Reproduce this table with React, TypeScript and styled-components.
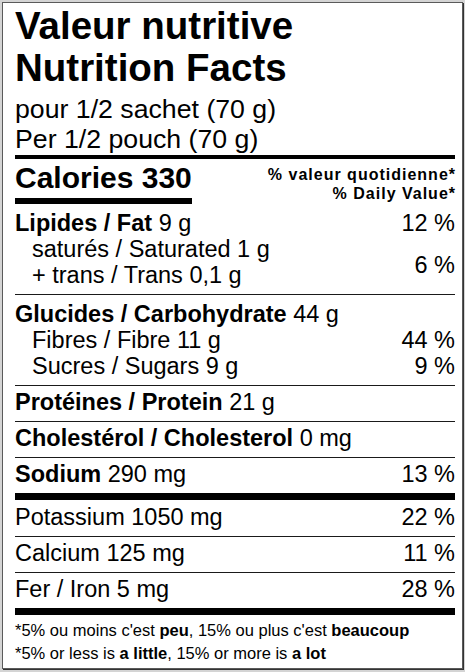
import React from 'react'
import styled, { createGlobalStyle } from 'styled-components'

const GlobalStyle = createGlobalStyle`
  *, *::before, *::after {
    box-sizing: border-box;
  }
  html, body {
    margin: 0;
    padding: 0;
    background: #d4d4d4;
  }
  body {
    font-family: "Liberation Sans", Arial, sans-serif;
    color: #000;
  }
`

const Panel = styled.div`
  margin: 2px;
  width: 461px;
  background: #fff;
  border: 1px solid #5a5a5a;
  box-shadow: 1px 1px 0 #333;
  padding: 2px 7px 4px 12px;
`

const Header = styled.header`
  padding-bottom: 1px;
`

const Title = styled.h1`
  margin: 0;
  font-size: 38.5px;
  line-height: 42px;
  font-weight: 700;
`

const Serving = styled.div`
  margin-top: 5px;
  font-size: 26.7px;
  line-height: 30px;
`

const CaloriesRow = styled.div`
  display: flex;
  justify-content: space-between;
  align-items: flex-end;
  border-top: 4px solid #000;
  padding-top: 2px;
`

const Calories = styled.span`
  font-size: 30px;
  line-height: 34px;
  font-weight: 700;
  padding-bottom: 3px;
  border-bottom: 6px solid #000;
`

const DvHeading = styled.div`
  font-size: 16px;
  line-height: 18.5px;
  font-weight: 700;
  letter-spacing: 1px;
  text-align: right;
  padding-bottom: 1px;
  margin-right: -1px;
`

const Group = styled.div<{ $first?: boolean }>`
  border-top: ${p => (p.$first ? 'none' : '1px solid #1a1a1a')};
  padding: 6px 0 6px;
  font-size: 23.5px;
  line-height: 26px;
`

const Line = styled.div<{ $indent?: boolean }>`
  display: flex;
  justify-content: space-between;
  padding-left: ${p => (p.$indent ? '17px' : '0')};
`

const Split = styled.div`
  display: flex;
  justify-content: space-between;
  align-items: center;
  padding-left: 17px;
`

const SplitPct = styled.span`
  padding-top: 5px;
`

const Row = styled.div<{ $thick?: boolean }>`
  display: flex;
  justify-content: space-between;
  border-top: ${p => (p.$thick ? '7px solid #000' : '1px solid #1a1a1a')};
  padding: ${p => (p.$thick ? '2px 0 4px' : '1px 0 4px')};
  font-size: 23.5px;
  line-height: 30px;
`

const Footnote = styled.footer`
  border-top: 7px solid #000;
  padding-top: 4px;
  font-size: 16.5px;
  line-height: 22.5px;
`

const B = styled.b`
  font-weight: 700;
`

export default function App() {
  return (
    <>
      <GlobalStyle />
      <Panel>
        <Header>
          <Title>
            Valeur nutritive
            <br />
            Nutrition Facts
          </Title>
          <Serving>
            pour 1/2 sachet (70 g)
            <br />
            Per 1/2 pouch (70 g)
          </Serving>
        </Header>

        <CaloriesRow>
          <Calories>Calories 330</Calories>
          <DvHeading>
            % valeur quotidienne*
            <br />% Daily Value*
          </DvHeading>
        </CaloriesRow>

        <Group $first>
          <Line>
            <span>
              <B>Lipides / Fat</B> 9 g
            </span>
            <span>12 %</span>
          </Line>
          <Split>
            <div>
              saturés / Saturated 1 g
              <br />+ trans / Trans 0,1 g
            </div>
            <SplitPct>6 %</SplitPct>
          </Split>
        </Group>

        <Group>
          <Line>
            <span>
              <B>Glucides / Carbohydrate</B> 44 g
            </span>
          </Line>
          <Line $indent>
            <span>Fibres / Fibre 11 g</span>
            <span>44 %</span>
          </Line>
          <Line $indent>
            <span>Sucres / Sugars 9 g</span>
            <span>9 %</span>
          </Line>
        </Group>

        <Row>
          <span>
            <B>Protéines / Protein</B> 21 g
          </span>
        </Row>
        <Row>
          <span>
            <B>Cholestérol / Cholesterol</B> 0 mg
          </span>
        </Row>
        <Row>
          <span>
            <B>Sodium</B> 290 mg
          </span>
          <span>13 %</span>
        </Row>
        <Row $thick>
          <span>Potassium 1050 mg</span>
          <span>22 %</span>
        </Row>
        <Row>
          <span>Calcium 125 mg</span>
          <span>11 %</span>
        </Row>
        <Row>
          <span>Fer / Iron 5 mg</span>
          <span>28 %</span>
        </Row>

        <Footnote>
          *5% ou moins c'est <B>peu</B>, 15% ou plus c'est <B>beaucoup</B>
          <br />
          *5% or less is <B>a little</B>, 15% or more is <B>a lot</B>
        </Footnote>
      </Panel>
    </>
  )
}
